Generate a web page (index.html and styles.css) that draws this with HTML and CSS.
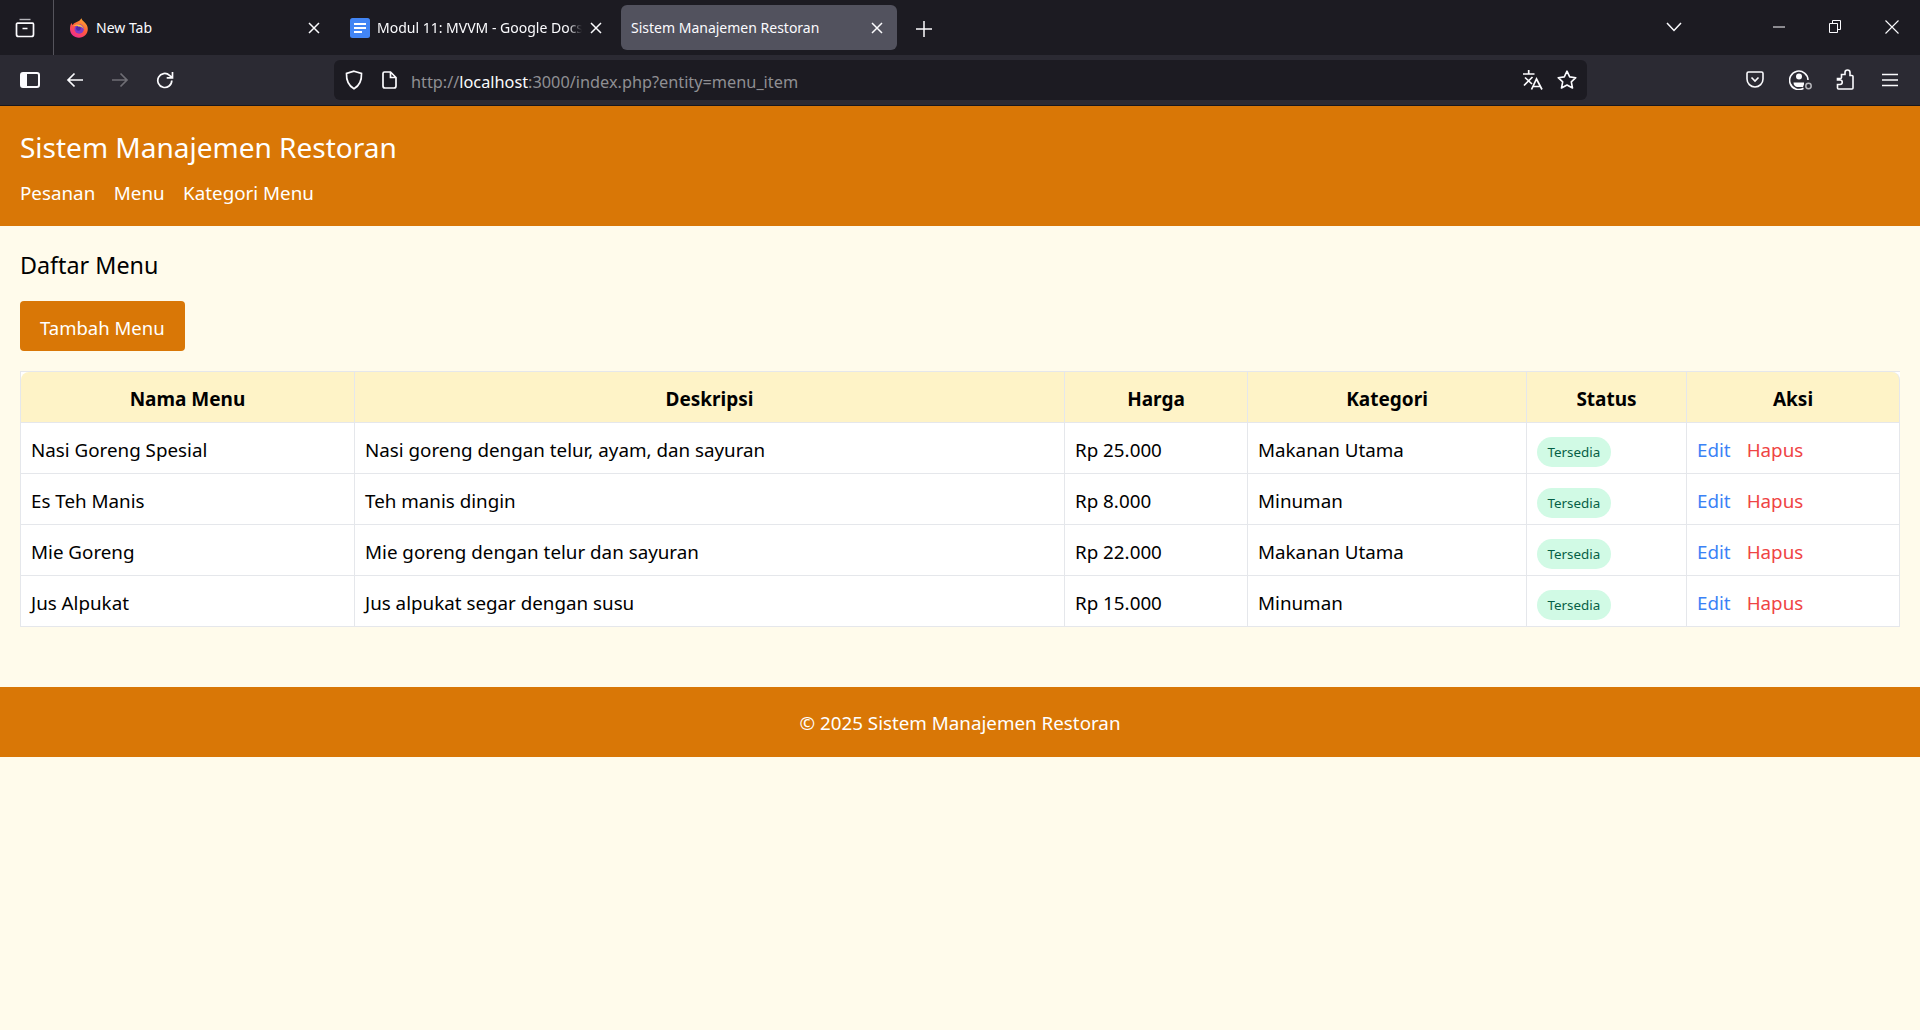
FILE: index.html
```html
<!DOCTYPE html>
<html lang="id">
<head>
    <meta charset="UTF-8">
    <title>Sistem Manajemen Restoran</title>
    <link rel="stylesheet" href="styles.css">
</head>
<body>
    <!-- Browser chrome -->
    <div class="tabbar">
        <div class="tab-slot">
            <svg class="icon" width="20" height="20" viewBox="0 0 20 20"><path d="M4.5 1.5h11" fill="none" stroke="#b5b5ba" stroke-width="1.400"/><path d="M2.500 5.200h15a1 1 0 0 1 1 1v10.300a2 2 0 0 1-2 2h-13a2 2 0 0 1-2-2V6.200a1 1 0 0 1 1-1zM7.500 10.500h5" fill="none" stroke="#fbfbfe" stroke-width="1.700"/></svg>
        </div>
        <div class="tab tab-first">
            <svg class="favicon" width="20" height="20" viewBox="0 0 20 20">
                <defs>
                    <linearGradient id="fx-body" x1="0.800" y1="0" x2="0.200" y2="1">
                        <stop offset="0" stop-color="#ffb02e"/>
                        <stop offset="0.500" stop-color="#ff5a3c"/>
                        <stop offset="1" stop-color="#f0259a"/>
                    </linearGradient>
                </defs>
                <path d="M1.200 8.500c.2-1.600 1-3 1.600-3.500 0 1 .4 1.600.9 2 .8-1.500 2-2.300 3.500-2.700C9.500 3.600 11.500 2.200 12.400.3c.6 1.800 1.700 2.800 3.100 4 2 1.700 3.300 4 3.300 6.700 0 4.800-3.900 8.800-8.800 8.800S1 15.900 1 11c0-.9 0-1.700.2-2.500z" fill="url(#fx-body)"/>
                <circle cx="10.200" cy="11" r="4.700" fill="#7f3bc8"/>
                <circle cx="9.400" cy="10.500" r="2.300" fill="#4b2aa8"/>
                <path d="M3.800 8.200c1.500-1.500 4-2 6-1.700 2.500.4 4.600 2.300 5 4.700-1.300-2-3.200-2.900-5.300-2.500-.4-1-2.500-1-5.700-.5z" fill="#ffc53d"/>
            </svg>
            <span class="tab-title">New Tab</span>
            <svg class="tab-close" width="12" height="12" viewBox="0 0 12 12"><path d="M1 1l10 10M11 1L1 11" stroke="#fbfbfe" stroke-width="1.500"/></svg>
        </div>
        <div class="tab tab-second">
            <svg class="favicon" width="20" height="20" viewBox="0 0 20 20">
                <rect width="20" height="20" rx="2.500" fill="#4285f4"/>
                <path d="M4 6h12M4 10h12M4 14h8" stroke="#fff" stroke-width="2"/>
            </svg>
            <span class="tab-title tab-fade">Modul 11: MVVM - Google Docs</span>
            <svg class="tab-close" width="12" height="12" viewBox="0 0 12 12"><path d="M1 1l10 10M11 1L1 11" stroke="#fbfbfe" stroke-width="1.500"/></svg>
        </div>
        <div class="tab tab-active">
            <span class="tab-title">Sistem Manajemen Restoran</span>
            <svg class="tab-close" width="12" height="12" viewBox="0 0 12 12"><path d="M1 1l10 10M11 1L1 11" stroke="#fbfbfe" stroke-width="1.500"/></svg>
        </div>
        <svg class="new-tab" width="16" height="16" viewBox="0 0 16 16"><path d="M8 0v16M0 8h16" stroke="#fbfbfe" stroke-width="1.500"/></svg>
        <svg class="tab-list" width="16" height="10" viewBox="0 0 16 10"><path d="M1 1l7 7.500L15 1" fill="none" stroke="#fbfbfe" stroke-width="1.500"/></svg>
        <div class="win-controls">
            <svg width="12" height="2" viewBox="0 0 12 2"><path d="M0 1h12" stroke="#fbfbfe"/></svg>
            <svg width="12" height="13" viewBox="0 0 12 13"><path d="M3.500 3V.5h8v9H9M.5 3.500h8v9h-8z" fill="none" stroke="#fbfbfe"/></svg>
            <svg width="14" height="14" viewBox="0 0 14 14"><path d="M.5.500l13 13M13.500.500l-13 13" stroke="#fbfbfe" stroke-width="1.100"/></svg>
        </div>
    </div>

    <div class="toolbar">
        <div class="tool-btn">
            <svg width="20" height="16" viewBox="0 0 20 16"><rect x="1" y="1" width="18" height="14" rx="2" fill="none" stroke="#fbfbfe" stroke-width="2"/><rect x="1" y="1" width="6" height="14" fill="#fbfbfe"/></svg>
        </div>
        <div class="tool-btn">
            <svg width="18" height="16" viewBox="0 0 18 16"><path d="M17 8H2M8.500 1.500L2 8l6.500 6.500" fill="none" stroke="#fbfbfe" stroke-width="1.700"/></svg>
        </div>
        <div class="tool-btn">
            <svg width="18" height="16" viewBox="0 0 18 16"><path d="M1 8h15M9.500 1.500L16 8l-6.500 6.500" fill="none" stroke="#6f6e75" stroke-width="1.700"/></svg>
        </div>
        <div class="tool-btn">
            <svg width="18" height="18" viewBox="0 0 18 18"><path d="M15.800 9.500a7 7 0 1 1-2.300-5.200L16 6.500M16.500 1v5.800h-5.800" fill="none" stroke="#fbfbfe" stroke-width="1.700"/></svg>
        </div>
        <div class="urlbar">
            <svg class="url-shield" width="18" height="20" viewBox="0 0 18 20"><path d="M9 1.200l7.500 2.300c.3 7-1.800 12-7.500 15.300C3.300 15.500 1.200 10.500 1.500 3.500z" fill="none" stroke="#fbfbfe" stroke-width="1.700"/></svg>
            <svg class="url-page" width="15" height="18" viewBox="0 0 15 18"><path d="M2.500 1h6l5.500 5.500V15a2 2 0 0 1-2 2H3a2 2 0 0 1-2-2V2.500A1.500 1.500 0 0 1 2.500 1zM8.500 1v5.500H14" fill="none" stroke="#fbfbfe" stroke-width="1.700"/></svg>
            <span class="url-text">http://<b>localhost</b>:3000/index.php?entity=menu_item</span>
            <svg class="url-translate" width="20" height="20" viewBox="0 0 20 20"><path d="M0 4h11.500M5.700 0v4M1 15.500l8.500-8.500M2 7.500l7 6.500M8.500 19.500L13.500 9l5.500 10.500M10.300 16.500h7" fill="none" stroke="#fbfbfe" stroke-width="1.700"/></svg>
            <svg class="url-star" width="20" height="19" viewBox="0 0 20 19"><path d="M10 1.200l2.700 5.700 6.100.8-4.500 4.200 1.200 6.100-5.500-3-5.500 3 1.200-6.100L1.200 7.700l6.100-.8z" fill="none" stroke="#fbfbfe" stroke-width="1.600" stroke-linejoin="round"/></svg>
        </div>
        <div class="tool-right">
            <div class="tool-btn">
                <svg width="18" height="17" viewBox="0 0 18 17"><path d="M2.500 1h13A1.500 1.500 0 0 1 17 2.500V8a8 8 0 0 1-16 0V2.500A1.500 1.500 0 0 1 2.500 1zM5.500 6.500L9 10l3.500-3.500" fill="none" stroke="#fbfbfe" stroke-width="1.600"/></svg>
            </div>
            <div class="tool-btn tool-account">
                <svg width="24" height="21" viewBox="0 0 24 21"><path d="M14.500 19.200A9.200 9.200 0 1 1 19 11" fill="none" stroke="#fbfbfe" stroke-width="1.600"/><circle cx="10" cy="7.500" r="3" fill="#fbfbfe"/><path d="M4.500 13.500h10.500v1.700l-1 2.700h-6c-2 0-3.500-2-3.500-4.400z" fill="#fbfbfe"/><circle cx="19.500" cy="17" r="2.700" fill="none" stroke="#b5b5ba" stroke-width="1.500"/></svg>
            </div>
            <div class="tool-btn">
                <svg width="18" height="21" viewBox="0 0 18 21"><path d="M5.500 5.500H9V3.500a2.500 2.500 0 0 1 5 0v3h2a1 1 0 0 1 1 1V19a1 1 0 0 1-1 1H2.500a1 1 0 0 1-1-1v-3.500H4a2 2 0 0 0 0-4.500H1.500V9.500h3a1 1 0 0 0 1-1z" fill="none" stroke="#fbfbfe" stroke-width="1.600"/></svg>
            </div>
            <div class="tool-btn">
                <svg width="16" height="14" viewBox="0 0 16 14"><path d="M0 1.500h16M0 7h16M0 12.500h16" stroke="#fbfbfe" stroke-width="1.500"/></svg>
            </div>
        </div>
    </div>

    <!-- Page -->
    <header class="site-header">
        <h1>Sistem Manajemen Restoran</h1>
        <nav class="site-nav">
            <a href="#">Pesanan</a>
            <a href="#">Menu</a>
            <a href="#">Kategori Menu</a>
        </nav>
    </header>

    <main class="content">
        <h2>Daftar Menu</h2>
        <a href="#" class="add-button">Tambah Menu</a>
        <table class="menu-table">
            <thead>
                <tr>
                    <th class="col-name">Nama Menu</th>
                    <th class="col-desc">Deskripsi</th>
                    <th class="col-price">Harga</th>
                    <th class="col-cat">Kategori</th>
                    <th class="col-status">Status</th>
                    <th class="col-action">Aksi</th>
                </tr>
            </thead>
            <tbody>
                <tr>
                    <td>Nasi Goreng Spesial</td>
                    <td>Nasi goreng dengan telur, ayam, dan sayuran</td>
                    <td>Rp 25.000</td>
                    <td>Makanan Utama</td>
                    <td class="cell-status"><span class="badge">Tersedia</span></td>
                    <td><a href="#" class="edit">Edit</a><a href="#" class="delete">Hapus</a></td>
                </tr>
                <tr>
                    <td>Es Teh Manis</td>
                    <td>Teh manis dingin</td>
                    <td>Rp 8.000</td>
                    <td>Minuman</td>
                    <td class="cell-status"><span class="badge">Tersedia</span></td>
                    <td><a href="#" class="edit">Edit</a><a href="#" class="delete">Hapus</a></td>
                </tr>
                <tr>
                    <td>Mie Goreng</td>
                    <td>Mie goreng dengan telur dan sayuran</td>
                    <td>Rp 22.000</td>
                    <td>Makanan Utama</td>
                    <td class="cell-status"><span class="badge">Tersedia</span></td>
                    <td><a href="#" class="edit">Edit</a><a href="#" class="delete">Hapus</a></td>
                </tr>
                <tr>
                    <td>Jus Alpukat</td>
                    <td>Jus alpukat segar dengan susu</td>
                    <td>Rp 15.000</td>
                    <td>Minuman</td>
                    <td class="cell-status"><span class="badge">Tersedia</span></td>
                    <td><a href="#" class="edit">Edit</a><a href="#" class="delete">Hapus</a></td>
                </tr>
            </tbody>
        </table>
    </main>

    <footer class="site-footer">&copy; 2025 Sistem Manajemen Restoran</footer>
</body>
</html>
```

FILE: styles.css
```css
* {
    box-sizing: border-box;
}

body {
    margin: 0;
    background-color: #fffbeb;
    color: #000;
    font-family: "Noto Sans", "Open Sans", sans-serif;
    font-size: 18.8px;
    overflow: hidden;
}

a {
    text-decoration: none;
}

/* Browser chrome */
.tabbar {
    display: flex;
    align-items: flex-start;
    height: 55px;
    background-color: #1c1b22;
    color: #fbfbfe;
    font-size: 14px;
}

.tab-slot {
    display: flex;
    align-items: center;
    justify-content: center;
    width: 54px;
    height: 55px;
    padding-right: 3px;
    border-right: 1px solid #55545c;
}

.tab {
    display: flex;
    align-items: center;
    height: 45px;
    margin-top: 5px;
    padding: 0 15px;
    border-radius: 6px;
}

.tab-first {
    width: 281px;
}

.tab-second {
    width: 282px;
}

.tab-active {
    width: 276px;
    margin-left: 4px;
    padding: 0 14px 0 10px;
    background-color: #52525e;
}

.favicon {
    flex: none;
    margin-right: 7px;
}

.tab-title {
    flex: 1;
    overflow: hidden;
    white-space: nowrap;
}

.tab-fade {
    -webkit-mask-image: linear-gradient(to right, #000 93%, transparent);
    mask-image: linear-gradient(to right, #000 93%, transparent);
}

.tab-close {
    flex: none;
    margin-left: 8px;
}

.new-tab {
    margin: 21px 0 0 19px;
}

.tab-list {
    margin: 22px 0 0 734px;
}

.win-controls {
    display: flex;
    align-items: center;
    gap: 44px;
    height: 53px;
    margin-left: auto;
    padding-right: 21px;
}

.toolbar {
    display: flex;
    align-items: center;
    height: 51px;
    padding: 5px 8px 6px 7px;
    background-color: #2b2a33;
    border-bottom: 1px solid #18171d;
}

.tool-btn {
    display: flex;
    align-items: center;
    justify-content: center;
    width: 45px;
    height: 40px;
}

.tool-account {
    padding-left: 2px;
}

.urlbar {
    display: flex;
    align-items: center;
    width: 1253px;
    height: 40px;
    margin-left: 147px;
    padding: 0 10px 0 11px;
    border-radius: 6px;
    background-color: #1c1b22;
    color: #8f8f93;
    font-size: 16.3px;
}

.url-page {
    margin-left: 19px;
}

.url-text {
    flex: 1;
    margin-left: 14px;
    padding-top: 4px;
}

.url-text b {
    color: #fbfbfe;
    font-weight: 400;
}

.url-star {
    margin-left: 14px;
}

.tool-right {
    display: flex;
    margin-left: auto;
}

/* Page header */
.site-header {
    height: 120px;
    padding: 22px 20px 0;
    background-color: #d97706;
    color: #fff;
}

.site-header h1 {
    margin: 0;
    font-size: 28px;
    font-weight: 400;
    line-height: 38px;
}

.site-nav {
    display: flex;
    gap: 18.5px;
    margin-top: 14px;
}

.site-nav a {
    color: #fff;
    line-height: 26px;
}

/* Content */
.content {
    padding: 21px 20px 0;
}

.content h2 {
    margin: 0;
    font-size: 23.3px;
    font-weight: 400;
    line-height: 36px;
}

.add-button {
    display: inline-block;
    margin-top: 18px;
    padding: 14px 20px 10px;
    border-radius: 4px;
    background-color: #d97706;
    color: #fff;
    font-size: 18.5px;
    line-height: 26px;
    vertical-align: top;
}

.menu-table {
    width: 1880px;
    margin-top: 20px;
    border-collapse: separate;
    border-spacing: 0;
    table-layout: fixed;
    background-color: #fff;
    border: 1px solid #e5e7eb;
    border-right: none;
    border-bottom: none;
}

.menu-table th,
.menu-table td {
    height: 51px;
    padding: 3px 10px 0;
    border-right: 1px solid #e5e7eb;
    border-bottom: 1px solid #e5e7eb;
    text-align: left;
    font-weight: 400;
}

.menu-table th {
    background-color: #fef3c7;
    font-size: 19px;
    font-weight: 700;
    text-align: center;
}

.menu-table th:first-child {
    border-top-left-radius: 8px;
}

.menu-table th:last-child {
    border-top-right-radius: 8px;
}

.col-name { width: 334px; }
.col-desc { width: 710px; }
.col-price { width: 183px; }
.col-cat { width: 279px; }
.col-status { width: 160px; }
.col-action { width: 213px; }

.menu-table .cell-status {
    padding-top: 7px;
}

.badge {
    display: inline-block;
    padding: 0 10.5px;
    border-radius: 15px;
    background-color: #d1fae5;
    color: #065f46;
    font-size: 13.4px;
    line-height: 30px;
}

.edit {
    margin-right: 16px;
    color: #3b82f6;
}

.delete {
    color: #ef4444;
}

.site-footer {
    height: 70px;
    margin-top: 60px;
    background-color: #d97706;
    color: #fff;
    text-align: center;
    line-height: 72px;
}
```
